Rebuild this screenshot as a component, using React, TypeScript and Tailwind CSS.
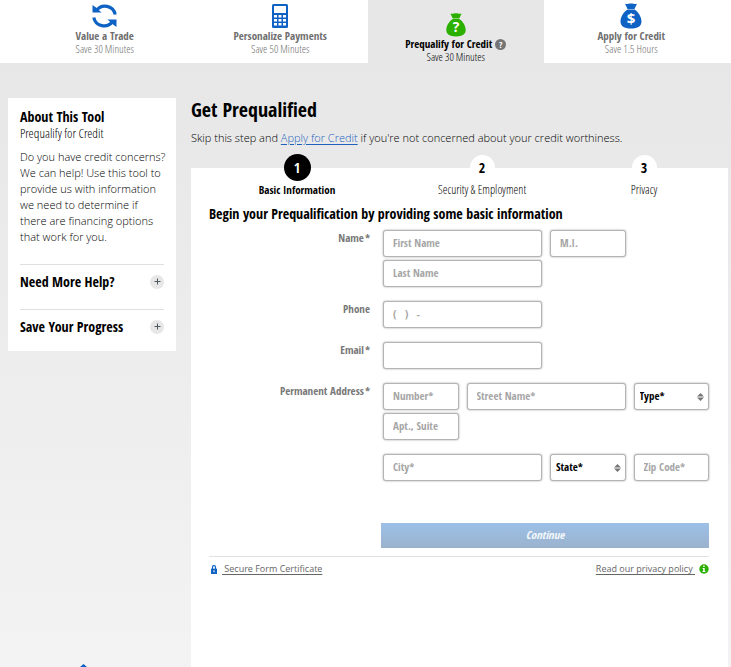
import type { ReactNode } from "react";

const bold = "font-['Open_Sans_Condensed','Roboto_Condensed',sans-serif] font-bold";
const light = "font-['Open_Sans_Condensed_Light','Open_Sans_Condensed',sans-serif] font-light";

const box =
  "block h-[27px] w-full min-w-0 rounded-[3px] border border-[#b4b4b4] bg-white text-[11px] text-black shadow-[0_0_2px_#999] outline-none placeholder:text-[#a6a6a6] placeholder:opacity-100";

function RefreshIcon() {
  return (
    <svg width="26" height="26" viewBox="0 0 26 26" aria-hidden="true">
      <g fill="none" stroke="#0d62c4" strokeWidth="3.200">
        <path d="M4.500 7.500A10.400 10.400 0 0 1 23.200 11.500" />
        <path d="M20.500 18.500A10.400 10.400 0 0 1 1.800 14.500" />
      </g>
      <path d="M.5 2 4 4.500 9.500 9.500H.5z" fill="#0d62c4" />
      <path d="M24.500 24 21 21.500 15.500 16.500H24.500z" fill="#0d62c4" />
    </svg>
  );
}

function CalculatorIcon() {
  return (
    <svg width="26" height="26" viewBox="0 0 26 26" aria-hidden="true">
      <rect x="5" y="1" width="16" height="24" rx="1.500" fill="#0d62c4" />
      <rect x="7" y="3" width="12" height="7" fill="#fff" />
      {[12, 16, 20].map((y) =>
        [7, 11.5, 16].map((x) => <rect key={`${x}-${y}`} x={x} y={y} width="3" height="2.500" fill="#fff" />)
      )}
    </svg>
  );
}

function BagIcon({ color, mark }: { color: string; mark: string }) {
  return (
    <svg width="26" height="26" viewBox="0 0 26 26" aria-hidden="true">
      <path
        d="M7 .7C9 1.300 10.500.4 13 .4S17 1.300 19 .7L16.500 6H9.500zM9.500 6.500H16.500C20.500 9 23.500 14 23.500 18.500 23.500 23 20 25.500 13 25.500S2.500 23 2.500 18.500C2.500 14 5.500 9 9.500 6.500z"
        fill={color}
      />
      <text x="13" y="21" textAnchor="middle" fontSize="15" fontWeight="700" fontFamily="Open Sans, sans-serif" fill="#fff">
        {mark}
      </text>
    </svg>
  );
}

function Tab({ icon, title, note, active }: { icon: ReactNode; title: string; note: string; active?: boolean }) {
  return (
    <a
      href="#"
      className={`flex flex-1 flex-col items-center whitespace-nowrap ${
        active ? "bg-[#e7e7e7] pt-[13px] text-black" : "pt-[3px] text-[#6f6f6f]"
      }`}
    >
      {icon}
      <span className={`${bold} flex items-center gap-[3px] text-[11px] leading-[14px]`}>
        {title}
        {active && (
          <span className="flex size-[11px] items-center justify-center rounded-full bg-[#757575] text-[9px] leading-none text-white">
            ?
          </span>
        )}
      </span>
      <span className={`${light} text-[11px] leading-[12px]`}>{note}</span>
    </a>
  );
}

function HelpRow({ title }: { title: string }) {
  return (
    <div className="flex h-[45px] items-center justify-between border-t border-[#e0e0e0] pb-[11px] last:h-[42px] last:pb-2">
      <h3 className={`${bold} text-[14px] leading-[20px]`}>{title}</h3>
      <button
        type="button"
        aria-label={`Expand ${title}`}
        className="flex size-[14px] items-center justify-center rounded-full bg-[#e7e7e7]"
      >
        <svg width="7" height="7" viewBox="0 0 7 7" stroke="#4c5a60" aria-hidden="true">
          <path d="M3.500 0.500V6.500M0.500 3.500H6.500" />
        </svg>
      </button>
    </div>
  );
}

function Step({ number, title, active }: { number: number; title: string; active?: boolean }) {
  return (
    <li className="flex flex-col items-center">
      <span className="flex h-[27px] items-center">
        <span
          className={`${bold} flex items-center justify-center rounded-full text-[14px] ${
            active ? "size-[27px] bg-black text-white" : "size-[25px] bg-white text-black"
          }`}
        >
          {number}
        </span>
      </span>
      <span className={`${active ? `${bold} text-[11px]` : `${light} text-[12px]`} leading-[17px]`}>{title}</span>
    </li>
  );
}

function FieldRow({ label, htmlFor, required, children }: { label: string; htmlFor: string; required?: boolean; children: ReactNode }) {
  return (
    <div className="grid grid-cols-[161px_1fr] gap-x-[13px]">
      <label htmlFor={htmlFor} className={`${bold} text-right text-[11px] leading-[16px] text-[#777]`}>
        {label}
        {required && <span className="pl-px">*</span>}
      </label>
      <div className="grid grid-cols-4 gap-x-2 gap-y-[3px]">{children}</div>
    </div>
  );
}

function TextBox({ id, label, hint, span }: { id?: string; label: string; hint?: string; span: string }) {
  return (
    <div className={span}>
      <input id={id} type="text" aria-label={label} placeholder={hint} className={`${box} ${bold} px-[9px] pb-[2px]`} />
    </div>
  );
}

function Select({ label }: { label: string }) {
  return (
    <div className="relative">
      <select aria-label={label} className={`${box} ${bold} appearance-none px-[5px]`}>
        <option>{label}</option>
      </select>
      <svg width="7" height="8" viewBox="0 0 7 8" fill="#777" aria-hidden="true" className="pointer-events-none absolute top-[10px] right-[5px]">
        <path d="M0 3.500 3.500 0 7 3.500zM0 4.500H7L3.500 8z" />
      </svg>
    </div>
  );
}

export default function App() {
  return (
    <div className="flex min-h-screen flex-col bg-linear-to-b from-[#e7e7e7] from-10% to-[#f3f3f3] font-['Open_Sans',sans-serif] text-black">
      <nav className="flex h-[63px] shrink-0 bg-white pr-3 pl-[17px]">
        <Tab icon={<RefreshIcon />} title="Value a Trade" note="Save 30 Minutes" />
        <Tab icon={<CalculatorIcon />} title="Personalize Payments" note="Save 50 Minutes" />
        <Tab icon={<BagIcon color="#2bb000" mark="?" />} title="Prequalify for Credit" note="Save 30 Minutes" active />
        <Tab icon={<BagIcon color="#0d62c4" mark="$" />} title="Apply for Credit" note="Save 1.5 Hours" />
      </nav>

      <div className="flex flex-1 gap-[15px] pt-[35px] pr-[3px] pl-2">
        <div className="flex w-[168px] shrink-0 flex-col justify-between">
          <aside className="bg-white px-3 pt-[10px]">
            <h2 className={`${bold} text-[14px] leading-[17px]`}>About This Tool</h2>
            <p className={`${light} text-[13px] leading-[17px]`}>Prequalify for Credit</p>
            <p className="mt-[7px] -mr-1 mb-[19px] text-[11px] leading-[16px] font-light">
              Do you have credit concerns? We can help! Use this tool to provide us with information we need to determine if
              <br />
              there are financing options
              <br />
              that work for you.
            </p>
            <HelpRow title="Need More Help?" />
            <HelpRow title="Save Your Progress" />
          </aside>
          <svg width="7" height="3" viewBox="0 0 7 3" className="ml-[72px]" aria-hidden="true">
            <path d="M3.500 0 7 3H0z" fill="#0d62c4" />
          </svg>
        </div>

        <main className="flex min-w-0 flex-1 flex-col">
          <h1 className={`${bold} text-[20px] leading-[24px]`}>Get Prequalified</h1>
          <p className="mt-[7px] text-[11px] leading-[18px] font-light">
            Skip this step and{" "}
            <a href="#" className="text-[#1d61bd] underline underline-offset-2">
              Apply for Credit
            </a>{" "}
            if you're not concerned about your credit worthiness.
          </p>

          <section className="mt-[21px] flex-1 bg-white pr-[19px] pl-[18px]">
            <ol className="-mt-[14px] grid grid-cols-[176fr_194fr_130fr]">
              <Step number={1} title="Basic Information" active />
              <Step number={2} title="Security & Employment" />
              <Step number={3} title="Privacy" />
            </ol>
            <form>
              <h2 className={`${bold} mt-[7px] text-[14px] leading-[18px]`}>
                Begin your Prequalification by providing some basic information
              </h2>
              <div className="mt-[7px] flex flex-col gap-[14px]">
                <FieldRow label="Name" htmlFor="first" required>
                  <TextBox id="first" label="First Name" hint="First Name" span="col-span-2" />
                  <TextBox label="Middle Initial" hint="M.I." span="col-span-1" />
                  <TextBox label="Last Name" hint="Last Name" span="col-span-2 col-start-1" />
                </FieldRow>
                <FieldRow label="Phone" htmlFor="phone">
                  <TextBox id="phone" label="Phone" hint="(   )   -" span="col-span-2 whitespace-pre" />
                </FieldRow>
                <FieldRow label="Email" htmlFor="email" required>
                  <TextBox id="email" label="Email" span="col-span-2" />
                </FieldRow>
                <FieldRow label="Permanent Address" htmlFor="number" required>
                  <TextBox id="number" label="Number" hint="Number*" span="col-span-1" />
                  <TextBox label="Street Name" hint="Street Name*" span="col-span-2" />
                  <Select label="Type*" />
                  <TextBox label="Apartment or Suite" hint="Apt., Suite" span="col-span-1" />
                  <TextBox label="City" hint="City*" span="col-span-2 col-start-1 mt-[11px]" />
                  <div className="mt-[11px]">
                    <Select label="State*" />
                  </div>
                  <TextBox label="Zip Code" hint="Zip Code*" span="col-span-1 mt-[11px]" />
                </FieldRow>
              </div>
              <div className="mt-[42px] border-b border-[#e2e2e2] pb-2 pl-[172px]">
                <button
                  type="submit"
                  className={`${bold} block h-[25px] w-full bg-linear-to-b from-[#9cc0e7] to-[#9bb2cd] text-[11px] text-white/90 italic`}
                >
                  Continue
                </button>
              </div>
            </form>
            <div className="mt-1 flex justify-between text-[9px] leading-[16px] text-[#666]">
              <a href="#" className="flex items-center gap-[5px]">
                <svg width="6" height="9" viewBox="0 0 6 9" aria-hidden="true" className="ml-[2px]">
                  <path d="M1.500 4V2.200a1.500 1.500 0 0 1 3 0V4" fill="none" stroke="#0d62c4" strokeWidth="1.200" />
                  <rect y="3.700" width="6" height="5.300" fill="#0d62c4" />
                  <rect x="2.500" y="5.200" width="1" height="2" fill="#fff" />
                </svg>
                <span className="whitespace-pre underline underline-offset-2"> Secure Form Certificate</span>
              </a>
              <a href="#" className="flex items-center gap-1">
                <span className="whitespace-pre underline underline-offset-2">Read our privacy policy </span>
                <svg width="10" height="10" viewBox="0 0 10 10" aria-hidden="true">
                  <circle cx="5" cy="5" r="4.700" fill="#2bb000" />
                  <path d="M4.200 1.500h1.500V3H4.200zM3.600 4h2.100v3h.7v1H3.600V7h.6V5h-.6z" fill="#fff" />
                </svg>
              </a>
            </div>
          </section>
        </main>
      </div>
    </div>
  );
}
